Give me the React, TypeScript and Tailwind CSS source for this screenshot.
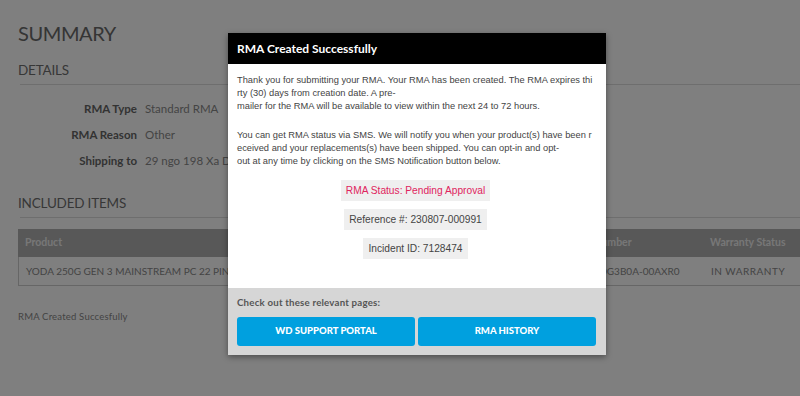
import React from 'react'

const details = [
  { label: 'RMA Type', value: 'Standard RMA' },
  { label: 'RMA Reason', value: 'Other' },
  { label: 'Shipping to', value: '29 ngo 198 Xa Dan, Phuong Lien, Dong Da, Ha Noi' },
]

function SummaryPage() {
  return (
    <div className="w-[900px] bg-white pl-[18px] pt-[20px] font-['Lato',sans-serif] text-[#777]">
      <h1 className="text-[20px] leading-[26px] tracking-[-0.4px] text-[#6a6a6a]">SUMMARY</h1>
      <h2 className="mt-[16px] text-[13.5px] leading-[16px] tracking-[-0.2px] text-[#6f6f6f]">DETAILS</h2>
      <div className="mt-[6px] ml-[2px] border-b border-[#ddd]" />
      <div className="mt-[16px] flex flex-col gap-[10px] text-[11.5px]">
        {details.map((d) => (
          <div key={d.label} className="flex h-[16px] items-center whitespace-nowrap">
            <span className="w-[119px] text-right font-bold text-[#666]">{d.label}</span>
            <span className="ml-[8px] text-[#888]">{d.value}</span>
          </div>
        ))}
      </div>
      <h2 className="mt-[26px] text-[13.5px] leading-[16px] tracking-[-0.2px] text-[#6f6f6f]">INCLUDED ITEMS</h2>
      <div className="mt-[6px] ml-[2px] border-b border-[#ddd]" />
      <div className="mt-[11px] w-[880px] text-[10.5px]">
        <div className="flex h-[28px] items-center bg-[#b0b0b0] font-bold text-[#eee] whitespace-nowrap">
          <span className="w-[547px] pl-[7px]">Product</span>
          <span className="w-[145px]">Serial Number</span>
          <span>Warranty Status</span>
        </div>
        <div className="flex h-[29px] items-center border-x border-b border-[#ccc] text-[10px] text-[#888] whitespace-nowrap">
          <span className="w-[547px] pl-[7px]">YODA 250G GEN 3 MAINSTREAM PC 22 PIN SSD</span>
          <span className="w-[145px]">WDS250G3B0A-00AXR0</span>
          <span className="tracking-[0.5px]">IN WARRANTY</span>
        </div>
      </div>
      <p className="mt-[24px] text-[9.5px] tracking-[0.2px] text-[#888]">RMA Created Succesfully</p>
      <div className="h-[80px]" />
    </div>
  )
}

function StatusChip({ children, pink }: { children: React.ReactNode; pink?: boolean }) {
  return (
    <div
      className={`bg-[#efefef] px-[5px] py-[3px] text-[10.2px] leading-[15px] ${pink ? 'text-[#e0245e]' : 'text-[#444]'}`}
    >
      {children}
    </div>
  )
}

function SuccessModal() {
  return (
    <div className="absolute left-[228px] top-[33px] w-[378px] shadow-[0_2px_6px_rgba(0,0,0,0.4)] font-['Liberation_Sans',Arial,sans-serif]">
      <div className="flex h-[31px] items-center bg-black px-[9px]">
        <span className="font-['Lato',sans-serif] text-[12px] font-bold text-white">RMA Created Successfully</span>
      </div>
      <div className="bg-white pl-[9px] pr-[12px] pt-[10px] pb-[29px] text-[9.3px] leading-[13px] text-[#444]">
        <p className="break-all">
          Thank you for submitting your RMA. Your RMA has been created. The RMA expires thirty (30) days from
          creation date. A pre-
          <br />
          mailer for the RMA will be available to view within the next 24 to 72 hours.
        </p>
        <p className="mt-[16px] break-all">
          You can get RMA status via SMS. We will notify you when your product(s) have been received and your
          replacements(s) have been shipped. You can opt-in and opt-
          <br />
          out at any time by clicking on the SMS Notification button below.
        </p>
        <div className="mt-[12px] flex flex-col items-center gap-[8px]">
          <StatusChip pink>RMA Status: Pending Approval</StatusChip>
          <StatusChip>Reference #: 230807-000991</StatusChip>
          <StatusChip>Incident ID: 7128474</StatusChip>
        </div>
      </div>
      <div className="bg-[#d6d6d6] px-[9px] pt-[7px] pb-[9px]">
        <p className="font-['Lato',sans-serif] text-[9.7px] font-bold tracking-[0.2px] text-[#555]">
          Check out these relevant pages:
        </p>
        <div className="mt-[7px] flex gap-[3px] pr-[1px]">
          {['WD SUPPORT PORTAL', 'RMA HISTORY'].map((label) => (
            <button
              key={label}
              className="flex h-[29px] flex-1 items-center justify-center rounded-[3px] bg-[#00a0df] font-['Lato',sans-serif] text-[9.5px] font-black text-white"
            >
              {label}
            </button>
          ))}
        </div>
      </div>
    </div>
  )
}

export default function App() {
  return (
    <div className="relative h-[396px] w-[800px] overflow-hidden">
      <SummaryPage />
      <div className="absolute inset-0 bg-black/50" />
      <SuccessModal />
    </div>
  )
}
